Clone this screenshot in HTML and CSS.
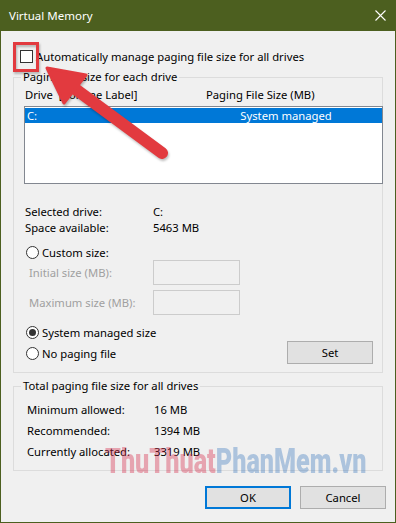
FILE: index.html
```html
<!DOCTYPE html>
<html>
<head>
<meta charset="utf-8">
<title>Virtual Memory</title>
<link rel="stylesheet" href="styles.css">
</head>
<body>
<div class="window">
  <div class="titlebar">
    <span class="title">Virtual Memory</span>
    <svg class="close" width="11" height="11" viewBox="0 0 11 11"><path d="M0.5 0.5L10.5 10.5M10.5 0.5L0.5 10.5" stroke="#ffffff" stroke-width="1.1"/></svg>
  </div>
  <div class="content">
    <div class="auto-row"><span class="checkbox"></span><span>Automatically manage paging file size for all drives</span></div>
    <fieldset class="group group-drives">
      <legend>Paging file size for each drive</legend>
      <div class="list-head"><span class="col-drive">Drive&nbsp; [Volume Label]</span><span class="col-size">Paging File Size (MB)</span></div>
      <div class="listbox">
        <div class="list-row selected"><span class="col-drive">C:</span><span class="col-size-val">System managed</span></div>
      </div>
      <div class="info">
        <div class="info-row"><span class="key">Selected drive:</span><span>C:</span></div>
        <div class="info-row"><span class="key">Space available:</span><span>5463 MB</span></div>
      </div>
      <div class="radio-row custom"><span class="radio"></span><span>Custom size:</span></div>
      <div class="field-row first"><span class="fkey">Initial size (MB):</span><span class="input"></span></div>
      <div class="field-row second"><span class="fkey">Maximum size (MB):</span><span class="input"></span></div>
      <div class="bottom-rows">
        <div class="radios">
          <div class="radio-row"><span class="radio checked"></span><span>System managed size</span></div>
          <div class="radio-row second-radio"><span class="radio"></span><span>No paging file</span></div>
        </div>
        <div class="btn set">Set</div>
      </div>
    </fieldset>
    <fieldset class="group group-total">
      <legend>Total paging file size for all drives</legend>
      <div class="total-row"><span class="tkey">Minimum allowed:</span><span>16 MB</span></div>
      <div class="total-row"><span class="tkey">Recommended:</span><span>1394 MB</span></div>
      <div class="total-row"><span class="tkey">Currently allocated:</span><span>3319 MB</span></div>
    </fieldset>
    <div class="actions"><div class="btn ok">OK</div><div class="btn">Cancel</div></div>
  </div>
  <div class="watermark"><span class="wm-red">ThuThuat</span><span class="wm-blue">PhanMem.vn</span></div>
  <svg class="annot" width="396" height="523" viewBox="0 0 396 523">
    <rect x="14.5" y="43.5" width="23" height="27" fill="none" stroke="#e23a3f" stroke-width="3"/>
    <line x1="74" y1="88" x2="162" y2="153" stroke="#e23a3f" stroke-width="12" stroke-linecap="round"/>
    <polygon points="47,68 86,75 64,103" fill="#e23a3f" stroke="#e23a3f" stroke-width="3" stroke-linejoin="round"/>
  </svg>
</div>
</body>
</html>
```

FILE: styles.css
```css
* { box-sizing: border-box; }
html, body { margin: 0; padding: 0; background: #f0f0f0; }
body {
  font-family: "Noto Sans", "Open Sans", sans-serif;
  font-size: 11.25px;
  color: #000;
}
.window {
  position: relative;
  width: 396px;
  height: 523px;
  background: #f0f0f0;
  border: 1px solid #4c5f1f;
  border-top: none;
  overflow: hidden;
}
.titlebar {
  height: 31px;
  margin: 0 -1px;
  background: #4c5f1f;
  display: flex;
  align-items: center;
  justify-content: space-between;
  padding: 0 10px 0 9px;
}
.title { color: #ffffff; font-size: 11.5px; line-height: 16px; }
.close { display: block; }
.content { padding: 18px 12px 0 12px; }
.auto-row {
  display: flex;
  align-items: center;
  height: 15px;
  line-height: 15px;
  padding-left: 7px;
  gap: 3px;
}
.checkbox {
  width: 13px; height: 13px;
  border: 1px solid #333333;
  background: #ffffff;
  flex: none;
}
.group {
  margin: 6px 0 0 0;
  padding: 0 0 8px 0;
  border: 1px solid #dcdcdc;
  min-width: 0;
}
.group legend {
  margin-left: 7px;
  padding: 0 2px;
  line-height: 14px;
}
.group-drives { padding-bottom: 8px; }
.list-head {
  margin-top: 4px;
  line-height: 14px;
  height: 14px;
  display: flex;
  padding-left: 11px;
}
.list-head .col-drive { width: 181px; }
.listbox {
  margin: 4px -1px 0 10px;
  height: 78px;
  border: 1px solid #828790;
  background: #ffffff;
  padding: 1px 0;
}
.list-row {
  height: 15px;
  line-height: 15px;
  display: flex;
  padding-left: 2px;
}
.list-row.selected { background: #0078d7; color: #ffffff; }
.list-row .col-drive { width: 174px; }
.list-row .col-size-val { width: 170px; text-align: center; }
.info { margin-top: 20px; padding-left: 11px; }
.info-row { display: flex; line-height: 16px; height: 16px; }
.info-row .key { width: 128px; }
.radio-row {
  display: flex;
  align-items: center;
  height: 15px;
  line-height: 15px;
  padding-left: 12px;
  gap: 3px;
}
.radio-row.custom { margin-top: 9px; }
.radio {
  width: 13px; height: 13px;
  border: 1px solid #333333;
  border-radius: 50%;
  background: #ffffff;
  flex: none;
  display: flex;
  align-items: center;
  justify-content: center;
}
.radio.checked::after {
  content: "";
  width: 7px; height: 7px;
  border-radius: 50%;
  background: #333333;
}
.field-row {
  display: flex;
  align-items: center;
  height: 25px;
  padding-left: 15px;
  color: #a0a0a0;
}
.field-row.second { margin-top: 5px; }
.fkey { width: 124px; }
.input {
  width: 87px; height: 25px;
  border: 1px solid #cccccc;
  background: #f0f0f0;
}
.bottom-rows {
  display: flex;
  justify-content: space-between;
  margin-top: 10px;
  padding-right: 9px;
}
.second-radio { margin-top: 6px; }
.btn {
  width: 86px;
  height: 23px;
  background: #e1e1e1;
  border: 1px solid #adadad;
  display: flex;
  align-items: center;
  justify-content: center;
  line-height: 15px;
}
.btn.set { margin-top: 16px; }
.btn.ok { border: 2px solid #0078d7; }
.group-total { margin-top: 6px; }
.total-row { display: flex; height: 21px; line-height: 21px; padding-left: 13px; }
.total-row:first-of-type { margin-top: 6px; }
.tkey { width: 127px; }
.actions {
  display: flex;
  justify-content: flex-end;
  gap: 9px;
  margin-top: 15px;
  margin-right: -3px;
}
.watermark {
  position: absolute;
  left: 104px;
  top: 442px;
  font-family: Roboto, "Liberation Sans", sans-serif;
  font-weight: 900;
  font-size: 35px;
  line-height: 40px;
  white-space: nowrap;
  transform: scaleX(0.72);
  transform-origin: left top;
  pointer-events: none;
}
.wm-red { color: rgba(214, 40, 70, 0.38); }
.wm-blue { color: rgba(60, 120, 190, 0.38); }
.annot {
  position: absolute;
  left: -1px;
  top: 0;
  pointer-events: none;
  filter: drop-shadow(1px 2px 1px rgba(0, 0, 0, 0.25));
}
```
